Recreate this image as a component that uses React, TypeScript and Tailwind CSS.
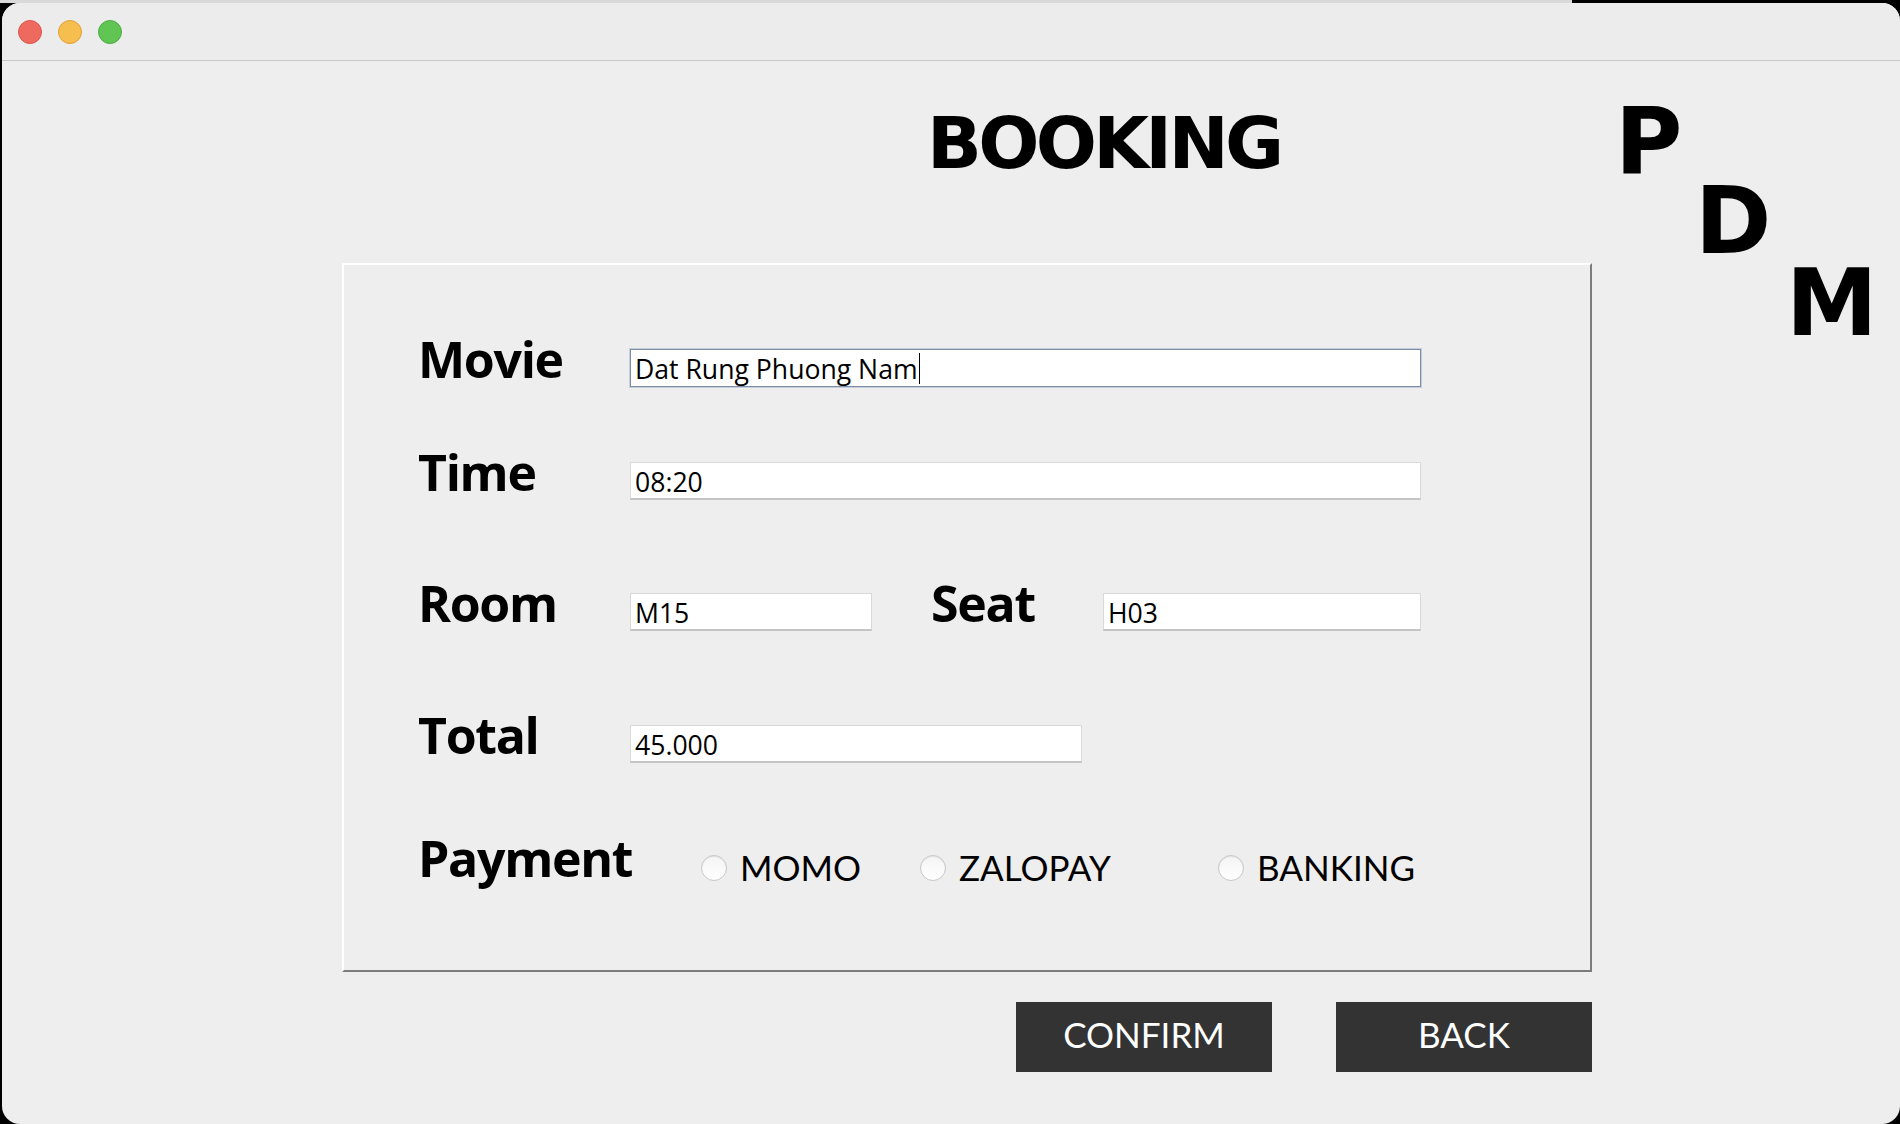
const label = "font-['Open_Sans',sans-serif] text-[50px] font-bold leading-[50px] tracking-[-1.3px] text-black";
const field =
  "flex h-[38px] items-center border border-[#d9d9d9] border-b-2 border-b-[#c4c4c4] bg-white pl-[4px] pt-[3px] font-['Open_Sans',sans-serif] text-[26.6px] leading-none text-black";

function Radio({ text, width }: { text: string; width?: string }) {
  return (
    <div className={`flex h-[50px] items-center gap-[13px] ${width ?? ""}`}>
      <span className="h-[26px] w-[26px] rounded-full border border-[#c8c8c8] bg-gradient-to-b from-[#f4f4f4] to-white shadow-[inset_0_1px_1px_rgba(0,0,0,0.08)]" />
      <span className="pb-[2px] font-['Lato',sans-serif] text-[35px] leading-none text-black">{text}</span>
    </div>
  );
}

export default function App() {
  return (
    <div className="h-[1124px] w-[1900px] overflow-hidden bg-black">
      <div className="flex h-[3px]">
        <div className="w-[1572px] bg-[#d9d9d9]" />
      </div>
      <div className="ml-[2px] h-[1121px] w-[1898px] overflow-hidden rounded-[18px] bg-[#eeeeee]">
        {/* title bar */}
        <div className="flex h-[58px] items-center gap-[16px] border-b border-[#c9c9c9] bg-[#ececec] pl-[16px]">
          <span className="h-[24px] w-[24px] rounded-full border border-[#d9544b] bg-[#ee6a5f]" />
          <span className="h-[24px] w-[24px] rounded-full border border-[#dea23b] bg-[#f5be4f]" />
          <span className="h-[24px] w-[24px] rounded-full border border-[#4fa943] bg-[#61c554]" />
        </div>

        <div className="flex">
          {/* main column */}
          <div className="ml-[340px] w-[1250px]">
            <div className="pl-[585px] pt-[46px]">
              <h1 className="font-['DejaVu_Sans',sans-serif] text-[72px] font-bold leading-[72px] tracking-[-3.7px] text-black">
                BOOKING
              </h1>
            </div>

            <div className="mt-[84px] h-[709px] border-2 border-l-white border-t-white border-r-[#7c7c7c] border-b-[#7c7c7c] pl-[74px] pt-[69px]">
              <div className="flex h-[113px] items-start">
                <div className={`w-[212px] ${label}`}>Movie</div>
                <div className="mt-[15px] flex h-[38px] w-[791px] items-center border border-[#7d8ea6] bg-white pl-[4px] font-['Open_Sans',sans-serif] text-[26.6px] leading-none text-black shadow-[0_0_0_1px_#c3cddb]">
                  <span className="pt-[2px]">Dat Rung Phuong Nam</span>
                  <span className="ml-[1px] inline-block h-[31px] w-px bg-black" />
                </div>
              </div>

              <div className="flex h-[131px] items-start">
                <div className={`w-[212px] ${label}`}>Time</div>
                <div className={`mt-[15px] w-[791px] ${field}`}>08:20</div>
              </div>

              <div className="flex h-[132px] items-start">
                <div className={`w-[212px] ${label}`}>Room</div>
                <div className={`mt-[15px] w-[242px] ${field}`}>M15</div>
                <div className={`ml-[59px] w-[172px] ${label}`}>Seat</div>
                <div className={`mt-[15px] w-[318px] ${field}`}>H03</div>
              </div>

              <div className="flex h-[123px] items-start">
                <div className={`w-[212px] ${label}`}>Total</div>
                <div className={`mt-[15px] w-[452px] ${field}`}>45.000</div>
              </div>

              <div className="flex items-start">
                <div className={`w-[283px] ${label}`}>Payment</div>
                <div className="mt-[10px] flex">
                  <Radio text="MOMO" width="w-[219px]" />
                  <Radio text="ZALOPAY" width="w-[298px]" />
                  <Radio text="BANKING" />
                </div>
              </div>
            </div>

            <div className="mt-[30px] flex justify-end gap-[64px]">
              <button className="flex h-[70px] w-[256px] items-center justify-center bg-[#333333] pb-[6px] font-['Lato',sans-serif] text-[35px] leading-none text-white">
                CONFIRM
              </button>
              <button className="flex h-[70px] w-[256px] items-center justify-center bg-[#333333] pb-[6px] font-['Lato',sans-serif] text-[35px] leading-none text-white">
                BACK
              </button>
            </div>
          </div>

          {/* PDM logo */}
          <div className="ml-[23px] flex flex-col pt-[35px] font-['DejaVu_Sans',sans-serif] text-[92px] font-bold leading-[92px] text-black">
            <span className="h-[80px]">P</span>
            <span className="ml-[80px] h-[82px]">D</span>
            <span className="ml-[171px] h-[92px]">M</span>
          </div>
        </div>
      </div>
    </div>
  );
}
